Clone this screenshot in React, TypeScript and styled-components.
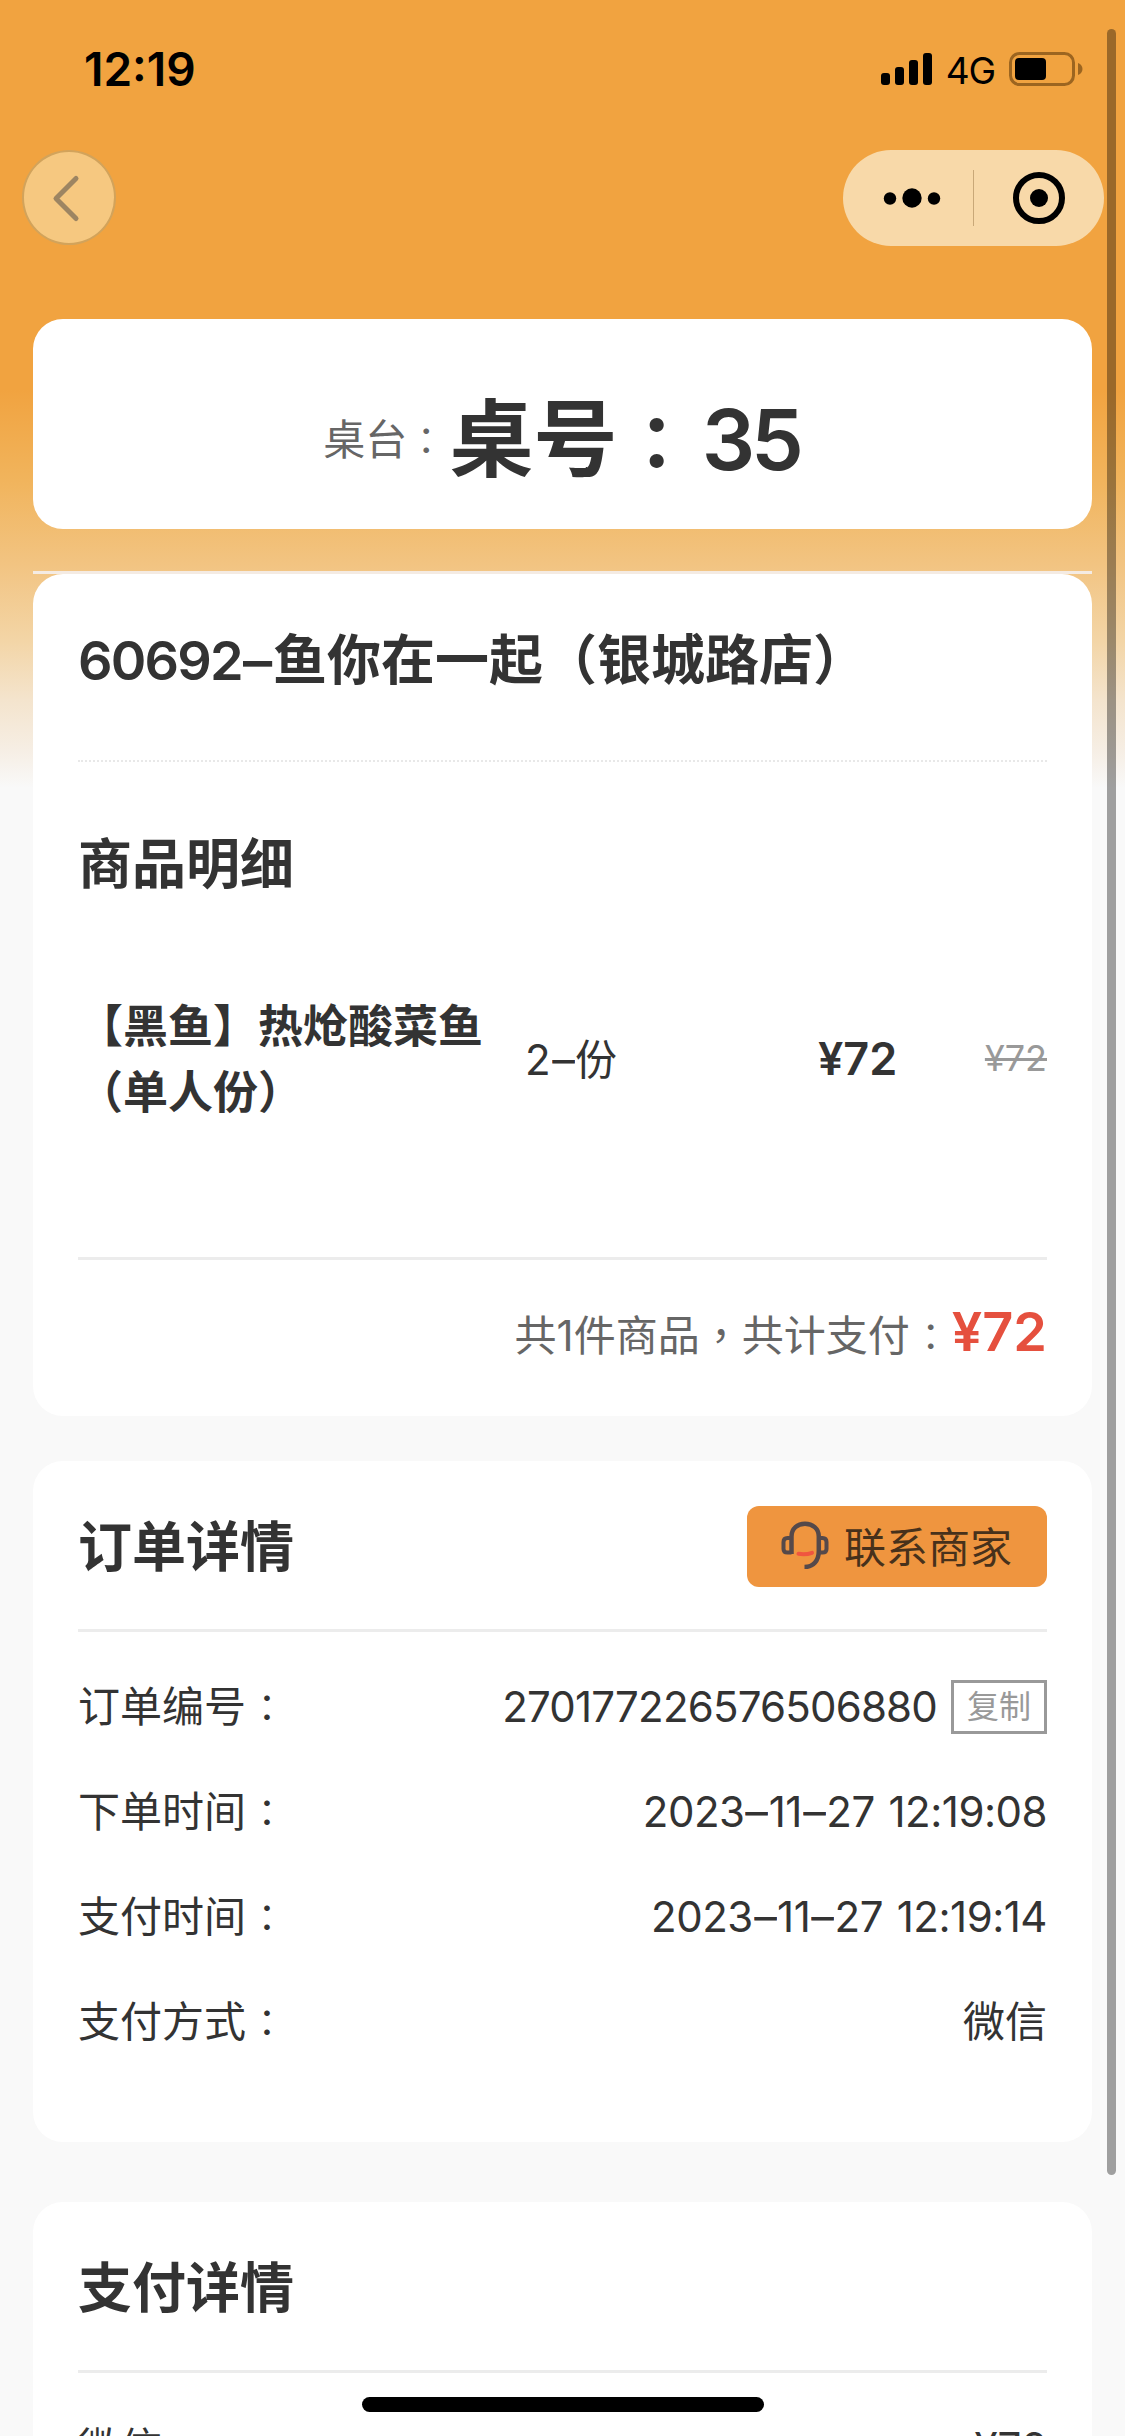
import React from "react";
import styled, { createGlobalStyle } from "styled-components";

const Global = createGlobalStyle`
  * { box-sizing: border-box; }
  body { margin: 0; background: #f9f9f9; color: #333; font-family: Inter, "Noto Sans CJK SC", sans-serif; }
`;

const Screen = styled.div`
  position: relative;
  width: 1125px;
  height: 2436px;
  overflow: hidden;
  background: linear-gradient(to bottom, #f1a340 0, #f1a340 390px, #f1b45c 480px, #f2c482 565px, #f3d5a6 640px, #f4e4cd 700px, #f6eee4 750px, #f9f9f9 788px);
  display: flex;
  flex-direction: column;
`;

const StatusBar = styled.header`
  flex: none;
  height: 138px;
  padding: 0 42px 0 84px;
  display: flex;
  align-items: center;
  justify-content: space-between;
  color: #000;
`;

const Clock = styled.span`
  font-size: 46px;
  font-weight: 600;
  line-height: 54px;
`;

const StatusIcons = styled.div`
  display: flex;
  align-items: center;
`;

const Network = styled.span`
  font-size: 37px;
  font-weight: 400;
  line-height: 42px;
  letter-spacing: -0.03em;
  margin: 3px 14px 0 13px;
`;

const NavBar = styled.nav`
  flex: none;
  height: 120px;
  padding: 12px 21px 0 22px;
  display: flex;
  justify-content: space-between;
  align-items: flex-start;
`;

const BackButton = styled.button`
  width: 94px;
  height: 95px;
  padding: 0 4px 0 0;
  border: 2px solid #d2a35b;
  border-radius: 50%;
  background: #f6c880;
  display: flex;
  align-items: center;
  justify-content: center;
`;

const Capsule = styled.div`
  width: 261px;
  height: 96px;
  border-radius: 48px;
  background: #f8d9a9;
  display: flex;
  align-items: center;
`;

const CapsuleHalf = styled.div<{ $inset?: number }>`
  flex: 0 0 130px;
  padding-left: ${(p) => p.$inset ?? 0}px;
  display: flex;
  justify-content: center;
`;

const CapsuleDivider = styled.div`
  width: 1px;
  height: 56px;
  background: #c9a878;
`;

const Content = styled.main`
  flex: none;
  padding: 61px 33px 0;
  display: flex;
  flex-direction: column;
`;

const Card = styled.section<{ $gap?: number; $height: number }>`
  height: ${(p) => p.$height}px;
  margin-top: ${(p) => p.$gap ?? 0}px;
  padding: 0 45px;
  border-radius: 30px;
  background: #fff;
  flex: none;
`;

const TableCard = styled(Card)`
  display: flex;
  justify-content: center;
  align-items: center;
  padding-top: 31px;
  padding-right: 47px;
`;

const TableLabel = styled.span`
  font-size: 42px;
  line-height: 60px;
  color: #666;
`;

const TableNumber = styled.span`
  font-size: 84px;
  font-weight: 600;
  line-height: 104px;
`;

/* Full-width punctuation centred in its em box */
const Punct = styled.span`
  font-family: "Noto Sans CJK TC", sans-serif;
`;

const Colon = styled(Punct)<{ $nudge?: number }>`
  font-size: 0.88em;
  line-height: 1;
  margin-left: ${(p) => 0.07 - (p.$nudge ?? 0)}em;
  margin-right: ${(p) => 0.07 + (p.$nudge ?? 0)}em;
`;

const Separator = styled.div`
  height: 3px;
  margin-top: 42px;
  background: #f4ebe3;
`;

const TitleRow = styled.div<{ $height: number; $line?: string }>`
  height: ${(p) => p.$height}px;
  border-bottom: ${(p) => p.$line ?? "none"};
  display: flex;
  align-items: center;
  justify-content: space-between;
`;

const Title = styled.h2<{ $shift?: number }>`
  margin: ${(p) => p.$shift ?? 0}px 0 0;
  font-size: 54px;
  font-weight: 600;
  line-height: 72px;
  white-space: nowrap;
`;

const Digits = styled.span<{ $track: number }>`
  letter-spacing: ${(p) => p.$track}em;
  word-spacing: 0.06em;
`;

const Dash = styled.span`
  display: inline-block;
  margin: 0 0.035em 0 0.045em;
  letter-spacing: 0;
  transform: scaleX(1.08);
`;

const ItemRow = styled.div`
  height: 302px;
  padding-top: 36px;
  display: grid;
  grid-template-columns: 447px 222px 1fr auto;
  border-bottom: 3px solid #ececec;
`;

const ItemName = styled.div`
  font-size: 45px;
  font-weight: 600;
  line-height: 66px;
  white-space: nowrap;
`;

const Cell = styled.div`
  height: 132px;
  display: flex;
  align-items: center;
`;

const Quantity = styled(Cell)`
  height: 124px;
  font-size: 42px;
`;

const Price = styled(Cell)`
  height: 129px;
  padding-left: 71px;
  font-size: 45px;
  font-weight: 600;
`;

const OldPrice = styled(Cell)`
  height: 128px;
  font-size: 36px;
  color: #999;
  text-decoration: line-through;
`;

const TotalRow = styled.div`
  height: 156px;
  padding-top: 30px;
  display: flex;
  justify-content: flex-end;
  align-items: baseline;
  font-size: 42px;
  line-height: 84px;
  color: #666;
`;

const Amount = styled.strong`
  font-size: 54px;
  font-weight: 600;
  color: #e5503e;
`;

const ContactButton = styled.button`
  width: 300px;
  height: 81px;
  margin-top: 2px;
  padding: 0 0 3px 34px;
  border: 0;
  border-radius: 12px;
  background: #ef953f;
  color: #47311b;
  font-family: inherit;
  font-size: 42px;
  display: flex;
  align-items: center;
  gap: 15px;
`;

const Rows = styled.dl`
  margin: 0;
  padding-top: 22px;
`;

const Row = styled.div`
  height: 105px;
  display: flex;
  align-items: center;
  justify-content: space-between;
  font-size: 42px;
  line-height: 60px;
`;

const Term = styled.dt`
  margin: 0;
`;

const Value = styled.dd`
  margin: 0;
  display: flex;
  align-items: center;
`;

const CopyButton = styled.button`
  width: 96px;
  height: 54px;
  margin-left: 14px;
  padding: 0;
  border: 3px solid #999;
  background: #fff;
  color: #999;
  font-family: inherit;
  font-size: 32px;
  line-height: 46px;
`;

const ScrollThumb = styled.div`
  position: absolute;
  left: 1107px;
  top: 29px;
  width: 9px;
  height: 2146px;
  border-radius: 5px;
  background: rgba(0, 0, 0, 0.36);
`;

const HomeIndicator = styled.div`
  position: absolute;
  left: 362px;
  top: 2397px;
  width: 402px;
  height: 15px;
  border-radius: 8px;
  background: #000;
`;

const line = "3px solid #ececec";

const Signal = () => (
  <svg width="52" height="34" viewBox="0 0 52 34">
    <rect x="0" y="21" width="9" height="12" rx="3" />
    <rect x="14" y="15" width="9" height="18" rx="3" />
    <rect x="28" y="8" width="9" height="25" rx="3" />
    <rect x="42" y="1" width="9" height="32" rx="3" />
  </svg>
);

const Battery = () => (
  <svg width="74" height="34" viewBox="0 0 74 34">
    <rect x="1.5" y="1.5" width="63" height="31" rx="9" fill="none" stroke="#9c6520" strokeWidth="3" />
    <rect x="6" y="6" width="31" height="22" rx="4" />
    <path d="M69 11C75 13 75 21 69 23Z" fill="#9c6520" />
  </svg>
);

const Headset = () => (
  <svg width="48" height="48" viewBox="0 0 48 48" fill="none" stroke="#55494a" strokeWidth="4.5">
    <path d="M10.500 33V15.500C10.500 7.500 16.500 2.800 24 2.800S37.800 7.500 37.800 15.500V30C37.800 40 32 46 23.500 46" />
    <path d="M10.500 17H6.500C4 17 2.500 18.500 2.500 21V28C2.500 30.500 4 31.500 6.500 31.500H10.500" strokeWidth="4" />
    <path d="M37.800 17H41.500C44 17 45.500 18.500 45.500 21V28C45.500 30.500 44 31.500 41.500 31.500H37.800" strokeWidth="4" />
    <path d="M17.500 32.800C22 33.600 27 33.200 31 31.800" stroke="#f0553f" strokeWidth="4" strokeLinecap="round" />
  </svg>
);

const Field = ({ label, children }: { label: string; children: React.ReactNode }) => (
  <Row>
    <Term>{label}<Colon>：</Colon></Term>
    <Value>{children}</Value>
  </Row>
);

const DateTime = ({ day, time }: { day: string[]; time: string }) => (
  <Digits $track={-0.012}>
    {day[0]}<Dash>–</Dash>{day[1]}<Dash>–</Dash>{day[2]} {time}
  </Digits>
);

export default function App() {
  return (
    <>
      <Global />
      <Screen>
        <StatusBar>
          <Clock>12:19</Clock>
          <StatusIcons>
            <Signal />
            <Network>4G</Network>
            <Battery />
          </StatusIcons>
        </StatusBar>
        <NavBar>
          <BackButton aria-label="返回">
            <svg width="40" height="50" viewBox="0 0 40 50" fill="none" stroke="#9d8562" strokeWidth="5" strokeLinecap="round" strokeLinejoin="round">
              <path d="M29 5.500L9 25.500L29 45.500" />
            </svg>
          </BackButton>
          <Capsule>
            <CapsuleHalf $inset={8}>
              <svg width="58" height="24" viewBox="0 0 58 24">
                <circle cx="7" cy="12.500" r="6.200" />
                <circle cx="29" cy="12" r="9.700" />
                <circle cx="51" cy="12.500" r="6.200" />
              </svg>
            </CapsuleHalf>
            <CapsuleDivider />
            <CapsuleHalf>
              <svg width="54" height="54" viewBox="0 0 54 54">
                <circle cx="27" cy="27" r="23" fill="none" stroke="#000" strokeWidth="6" />
                <circle cx="27" cy="27" r="9" />
              </svg>
            </CapsuleHalf>
          </Capsule>
        </NavBar>
        <Content>
          <TableCard $height={210}>
            <TableLabel>桌台<Colon $nudge={0.06}>：</Colon></TableLabel>
            <TableNumber>桌号<Colon $nudge={0.04}>：</Colon><Digits $track={-0.05}>35</Digits></TableNumber>
          </TableCard>
          <Separator />
          <Card $height={842}>
            <TitleRow $height={188} $line="2px dotted #e8e8e8">
              <Title $shift={-12}><Digits $track={-0.034}>60692</Digits><Dash>–</Dash>鱼你在一起（银城路店）</Title>
            </TitleRow>
            <TitleRow $height={196}>
              <Title $shift={9}>商品明细</Title>
            </TitleRow>
            <ItemRow>
              <ItemName>【黑鱼】热炝酸菜鱼<br />（单人份）</ItemName>
              <Quantity><span>2<Dash>–</Dash>份</span></Quantity>
              <Price>¥72</Price>
              <OldPrice>¥72</OldPrice>
            </ItemRow>
            <TotalRow>
              <span>共1件商品<Punct>，</Punct>共计支付<Colon>：</Colon></span>
              <Amount>¥72</Amount>
            </TotalRow>
          </Card>
          <Card $height={681} $gap={45}>
            <TitleRow $height={171} $line={line}>
              <Title $shift={5}>订单详情</Title>
              <ContactButton><Headset />联系商家</ContactButton>
            </TitleRow>
            <Rows>
              <Field label="订单编号">
                <Digits $track={-0.019}>270177226576506880</Digits>
                <CopyButton>复制</CopyButton>
              </Field>
              <Field label="下单时间"><DateTime day={["2023", "11", "27"]} time="12:19:08" /></Field>
              <Field label="支付时间"><DateTime day={["2023", "11", "27"]} time="12:19:14" /></Field>
              <Field label="支付方式">微信</Field>
            </Rows>
          </Card>
          <Card $height={400} $gap={60}>
            <TitleRow $height={171} $line={line}>
              <Title $shift={5}>支付详情</Title>
            </TitleRow>
            <Rows>
              <Row><Term>微信</Term><Value>¥72</Value></Row>
            </Rows>
          </Card>
        </Content>
        <ScrollThumb />
        <HomeIndicator />
      </Screen>
    </>
  );
}
